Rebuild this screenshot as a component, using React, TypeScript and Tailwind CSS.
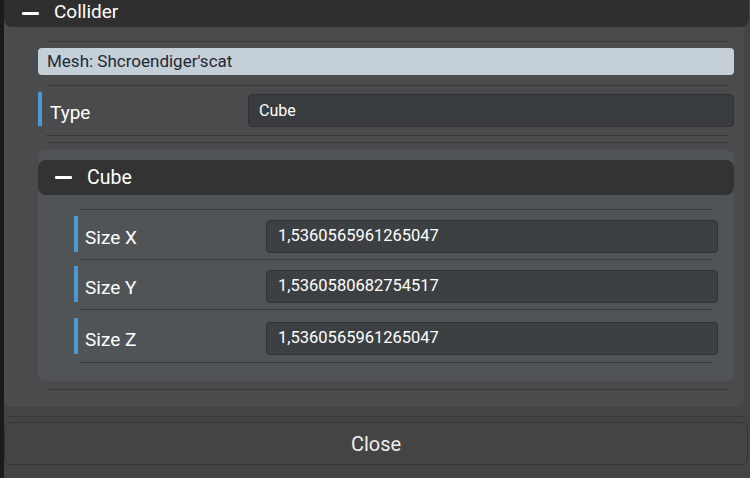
const sizes = [
  { label: 'Size X', value: '1,5360565961265047' },
  { label: 'Size Y', value: '1,5360580682754517' },
  { label: 'Size Z', value: '1,5360565961265047' },
]

function Sep({ className = '' }: { className?: string }) {
  return <div className={`h-px bg-[#37393a] ${className}`} />
}

function Dash() {
  return <span className="block w-[17px] h-[3px] bg-white rounded-[1px]" />
}

export default function App() {
  return (
    <div
      className="w-[750px] h-[478px] flex bg-[#1b1b1b] overflow-hidden text-white"
      style={{ fontFamily: 'Roboto, "Noto Sans", sans-serif' }}
    >
      <div className="w-[4px] shrink-0" />
      <div className="flex-1 bg-[#444444] flex flex-col">
        {/* Collider section */}
        <div className="mr-[6px] bg-[#4a4b4c] rounded-b-[8px]">
          <div className="h-[27px] -mr-[5px] bg-[#2f2f2f] rounded-b-[8px] flex items-center pl-[18px] gap-[15px]">
            <Dash />
            <span className="text-[19px] leading-none -mt-[4px]">Collider</span>
          </div>

          <div className="pl-[34px] pr-[10px] pb-[17px]">
            <Sep className="mt-[14px] ml-[8px] mr-[6px]" />
            <div className="mt-[6px] h-[27px] bg-[#c5cfd8] rounded-[4px] flex items-center pl-[9px] text-[17px] text-[#1d2933]">
              Mesh: Shcroendiger'scat
            </div>
            <Sep className="mt-[10px] ml-[8px] mr-[6px]" />

            <div className="mt-[6px] flex items-start">
              <div className="w-[4px] h-[34px] bg-[#4a9ad4]" />
              <span className="w-[206px] h-[35px] pl-[8px] pt-[8px] text-[19px] flex items-center">Type</span>
              <div className="flex-1 h-[33px] mt-[2px] bg-[#393c3e] border border-[#2e3032] rounded-[4px] flex items-center pl-[10px] text-[16px]">
                Cube
              </div>
            </div>
            <Sep className="mt-[8px] ml-[8px] mr-[6px]" />
            <Sep className="mt-[6px] ml-[8px] mr-[6px]" />

            {/* Cube sub-panel */}
            <div className="mt-[7px] bg-[#505457] rounded-[6px] pt-[10px] pb-[18px]">
              <div className="h-[35px] bg-[#333333] rounded-[8px] flex items-center pl-[17px] gap-[15px]">
                <Dash />
                <span className="text-[19.5px] leading-none">Cube</span>
              </div>
              <div className="pl-[36px] pr-[16px]">
                {sizes.map((s, i) => (
                  <div key={s.label}>
                    <Sep className={`${i === 0 ? 'mt-[14px]' : 'mt-[6px]'} ml-[6px] mr-[6px]`} />
                    <div className={`${i === 2 ? 'mt-[8px]' : 'mt-[6px]'} flex items-start`}>
                      <div className="w-[4px] h-[36px] bg-[#4a9ad4]" />
                      <span className="w-[188px] h-[37px] pl-[7px] pt-[8px] text-[19px] flex items-center">{s.label}</span>
                      <div className="flex-1 h-[33px] mt-[4px] bg-[#3d4043] border border-[#303234] rounded-[4px] flex items-center pl-[11px] text-[16.5px]">
                        {s.value}
                      </div>
                    </div>
                  </div>
                ))}
                <Sep className="mt-[7px] ml-[6px] mr-[6px]" />
              </div>
            </div>
            <Sep className="mt-[8px] ml-[8px] mr-[6px]" />
          </div>
        </div>

        <Sep className="mt-[9px] ml-[3px] mr-[5px]" />
        <button className="mt-[5px] mr-[2px] h-[43px] bg-[#444444] border border-[#363636] rounded-[6px] text-[20px] text-[#eeeeee] flex items-center justify-center">
          Close
        </button>
      </div>
    </div>
  )
}
